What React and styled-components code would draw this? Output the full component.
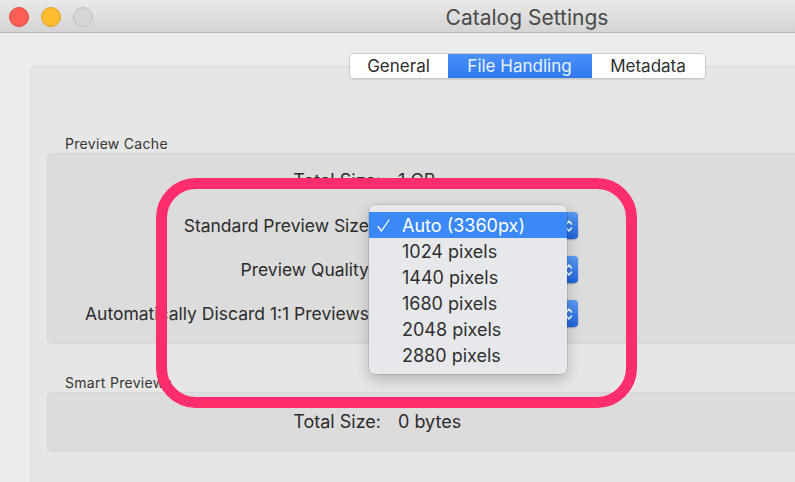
import React from "react";
import styled, { createGlobalStyle } from "styled-components";

const GlobalStyle = createGlobalStyle`
  html, body {
    margin: 0;
    padding: 0;
    overflow: hidden;
    background: #ececec;
  }
  body {
    font-family: Inter, "Noto Sans", sans-serif;
    -webkit-font-smoothing: antialiased;
  }
`;

const tabs = [
	{ label: "General", w: 98 },
	{ label: "File Handling", w: 144, active: true },
	{ label: "Metadata", w: 113 },
];

const sizes = ["Auto (3360px)", "1024 pixels", "1440 pixels", "1680 pixels", "2048 pixels", "2880 pixels"];

const popupRows = ["Standard Preview Size:", "Preview Quality:", "Automatically Discard 1:1 Previews:"];

const Chevrons = () => (
	<svg width="8" height="16" viewBox="0 0 8 16" fill="none" stroke="#fff" strokeWidth="1.4" strokeLinecap="round" strokeLinejoin="round">
		<path d="M1.5 6 L4 3 L6.5 6" />
		<path d="M1.5 10 L4 13 L6.5 10" />
	</svg>
);

const CheckMark = () => (
	<svg width="13" height="13" viewBox="0 0 13 13" fill="none" stroke="#fff" strokeWidth="1.3" strokeLinecap="round" strokeLinejoin="round">
		<path d="M1 7.5 L4.5 12 L12 1" />
	</svg>
);

const App = () => {
	return (
		<>
			<GlobalStyle />
			<Window>
				<TitleBar>
					<Lights>
						<Light color="#fd5f57" edge="#e1463f" />
						<Light color="#febc2e" edge="#e0a027" />
						<Light color="#d6d6d6" edge="#bfbfbf" />
					</Lights>
					<Title>Catalog Settings</Title>
					<span />
				</TitleBar>

				<Content>
					<Tabs>
						{tabs.map(t => (
							<Tab key={t.label} w={t.w} active={t.active}>
								{t.label}
							</Tab>
						))}
					</Tabs>

					<Panel>
						<GroupLabel>Preview Cache</GroupLabel>
						<Group>
							<Row labelW={333} colGap={17} style={{ marginBottom: 4 }}>
								<Label big>Total Size:</Label>
								<Value>1 GB</Value>
							</Row>
							{popupRows.map(label => (
								<Row key={label} labelW={326} colGap={2}>
									<Label>{label}</Label>
									<Popup>
										<Stepper>
											<Chevrons />
										</Stepper>
									</Popup>
								</Row>
							))}
						</Group>

						<GroupLabel spaced>Smart Previews</GroupLabel>
						<Group small>
							<Row labelW={333} colGap={17}>
								<Label big>Total Size:</Label>
								<Value>0 bytes</Value>
							</Row>
						</Group>
					</Panel>
				</Content>

				<Menu>
					{sizes.map((s, i) => (
						<MenuItem key={s} selected={i === 0}>
							<Check>{i === 0 && <CheckMark />}</Check>
							{s}
						</MenuItem>
					))}
				</Menu>

				<Highlight />
			</Window>
		</>
	);
};

const Window = styled.div`
	position: relative;
	width: 1054px;
	height: 482px;
	background: #ececec;
	overflow: hidden;
`;

const TitleBar = styled.div`
	display: grid;
	grid-template-columns: 1fr auto 1fr;
	align-items: center;
	height: 32px;
	background: linear-gradient(#e9e9e9, #d4d4d4);
	border-bottom: 1px solid #b7b7b7;
`;

const Lights = styled.div`
	display: flex;
	gap: 12px;
	padding-left: 9px;
	margin-top: 1px;
`;

const Light = styled.span`
	width: 20px;
	height: 20px;
	border-radius: 50%;
	box-sizing: border-box;
	background: ${p => p.color};
	border: 1px solid ${p => p.edge};
`;

const Title = styled.div`
	font-size: 21px;
	color: #4a4a4a;
	margin-top: 2px;
`;

const Content = styled.div`
	padding: 20px 30px 0;
`;

const Tabs = styled.div`
	position: relative;
	z-index: 1;
	display: flex;
	width: max-content;
	margin: 0 auto -13px;
	border: 1px solid #c9c9c9;
	border-radius: 5px;
	overflow: hidden;
	background: #fff;
	box-shadow: 0 1px 1px rgba(0, 0, 0, 0.08);
`;

const Tab = styled.div`
	width: ${p => p.w}px;
	height: 24px;
	line-height: 24px;
	text-align: center;
	font-size: 17px;
	color: ${p => (p.active ? "#eaf2ff" : "#2e2e2e")};
	background: ${p => (p.active ? "linear-gradient(#4a90f7, #2f79f1)" : "#fff")};
`;

const Panel = styled.div`
	min-height: 480px;
	padding: 69px 16px 0;
	background: #e6e6e6;
	border: 1px solid #dadada;
	border-radius: 5px;
`;

const GroupLabel = styled.div`
	font-size: 14px;
	letter-spacing: 0.3px;
	line-height: 16px;
	color: #353535;
	margin: ${p => (p.spaced ? "31px" : "0")} 0 1px 18px;
`;

const Group = styled.div`
	display: flex;
	flex-direction: column;
	gap: 17px;
	padding: ${p => (p.small ? "19px 0" : "17px 0 16px")};
	background: #dcdcdc;
	border: 1px solid #d5d5d5;
	border-radius: 5px;
`;

const Row = styled.div`
	display: grid;
	grid-template-columns: ${p => p.labelW}px auto;
	column-gap: ${p => p.colGap}px;
	align-items: center;
`;

const Label = styled.div`
	text-align: right;
	font-size: ${p => (p.big ? "18px" : "17.5px")};
	line-height: 20px;
	color: #2c2c2c;
	white-space: nowrap;
`;

const Value = styled.div`
	font-size: 18px;
	line-height: 20px;
	color: #2c2c2c;
`;

const Popup = styled.div`
	display: flex;
	align-items: center;
	justify-content: flex-end;
	width: 202px;
	height: 27px;
	background: #fff;
	border-radius: 5px;
	box-shadow: 0 0.5px 1.5px rgba(0, 0, 0, 0.3);
`;

const Stepper = styled.div`
	display: flex;
	align-items: center;
	justify-content: center;
	width: 18px;
	height: 100%;
	border-radius: 4px;
	background: linear-gradient(#5a9cf6, #1e63d8);
`;

const Menu = styled.div`
	position: absolute;
	left: 369px;
	top: 205px;
	z-index: 3;
	width: 198px;
	padding: 7px 0 6px;
	background: #e7e8eb;
	border-radius: 6px;
	box-shadow: 0 0 0 0.5px rgba(0, 0, 0, 0.18), 0 5px 14px rgba(0, 0, 0, 0.22);
`;

const MenuItem = styled.div`
	display: flex;
	align-items: center;
	height: 26px;
	font-size: 18px;
	color: ${p => (p.selected ? "#fff" : "#2f2f2f")};
	background: ${p => (p.selected ? "#3a89f6" : "transparent")};
`;

const Check = styled.span`
	display: flex;
	align-items: center;
	width: 33px;
	padding-left: 8px;
	box-sizing: border-box;
`;

const Highlight = styled.div`
	position: absolute;
	left: 156px;
	top: 178px;
	z-index: 2;
	width: 481px;
	height: 230px;
	box-sizing: border-box;
	border: 11px solid #fe2d6c;
	border-radius: 40px;
`;

export default App;
